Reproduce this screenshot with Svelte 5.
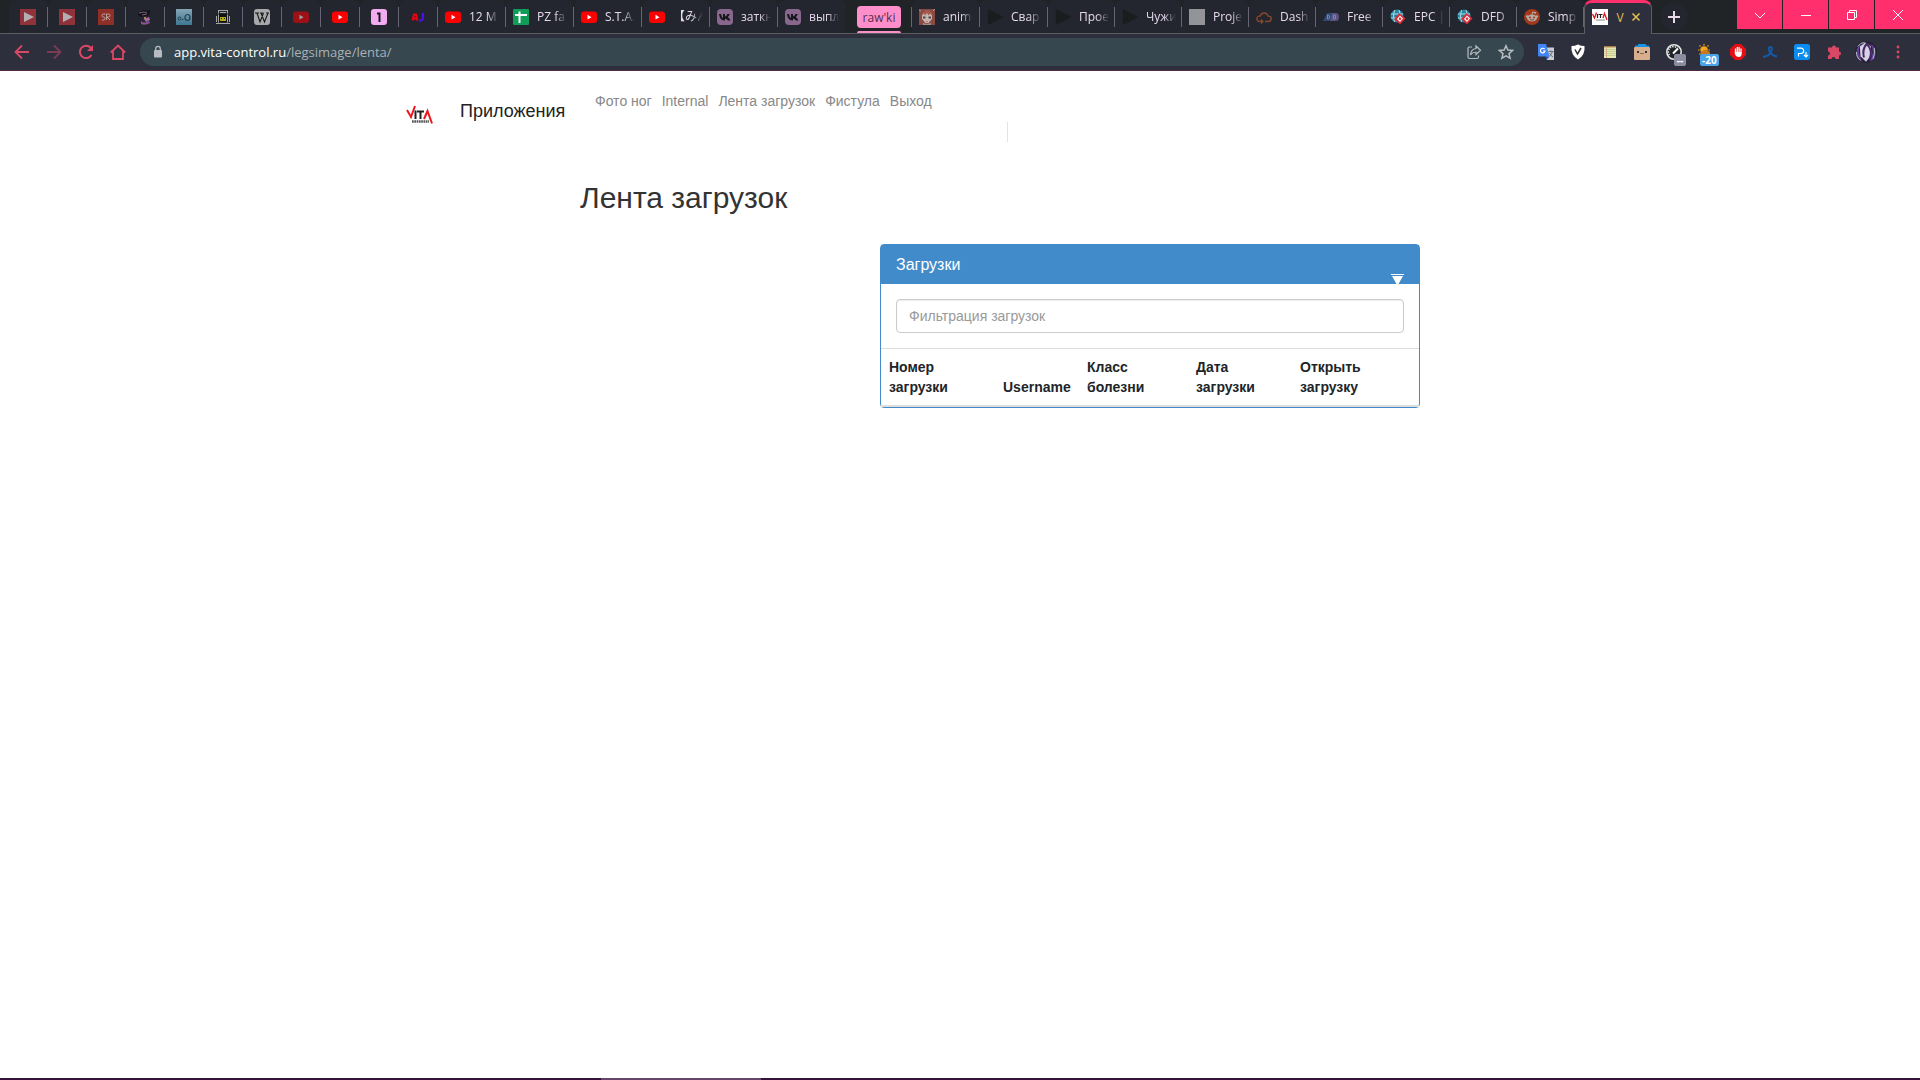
<script>
  const pinned = ['play', 'play', 'sr', 'robot', 'eyes', 'train', 'wiki', 'ytdim', 'yt', 'one', 'aj'];
  const tabs = [
    { icon: 'yt', title: '12 М' },
    { icon: 'sheet', title: 'PZ fa' },
    { icon: 'yt', title: 'S.T.A.' },
    { icon: 'yt', title: '【みん' },
    { icon: 'vk', title: 'заткн' },
    { icon: 'vk', title: 'выпл' }
  ];
  const grouped = [
    { icon: 'anime', title: 'anime' },
    { icon: 'dark', title: 'Свар' },
    { icon: 'dark', title: 'Прое' },
    { icon: 'dark', title: 'Чужи' },
    { icon: 'square', title: 'Proje' },
    { icon: 'cloud', title: 'Dash' },
    { icon: 'db', title: 'Free' },
    { icon: 'globe', title: 'EPC |' },
    { icon: 'globe', title: 'DFD |' },
    { icon: 'reddit', title: 'Simp' }
  ];
  const extensions = [
    ['translate', 'Переводчик'],
    ['shield', 'Щит'],
    ['notes', 'Заметки'],
    ['box', 'Коробка'],
    ['gauge', 'Скорость'],
    ['sun', 'Погода'],
    ['hand', 'Блокировщик'],
    ['ribbon', 'Лента'],
    ['pd', 'Загрузчик'],
    ['puzzle', 'Расширения'],
    ['avatar', 'Профиль'],
    ['dots', 'Меню']
  ];
  const badges = { gauge: '--', sun: '-20' };
  const links = ['Фото ног', 'Internal', 'Лента загрузок', 'Фистула', 'Выход'];
  const columns = ['Номер загрузки', 'Username', 'Класс болезни', 'Дата загрузки', 'Открыть загрузку'];
  let filter = $state('');
</script>

{#snippet icon(name)}
  <svg class="icon" viewBox="0 0 16 16" aria-hidden="true">
    {#if name === 'play'}
      <rect width="16" height="16" fill="#8f3239" /><path d="M4 3l10 5-10 5z" fill="#b5afb3" />
    {:else if name === 'sr'}
      <rect width="16" height="16" fill="#8e2f28" />
      <path d="M7.500 5H5.500a1.500 1.500 0 0 0 0 3a1.500 1.500 0 0 1 0 3H4M8.500 11V5h2a1.500 1.500 0 0 1 0 3H9l3 3" fill="none" stroke="#b9a39f" stroke-width="1" />
    {:else if name === 'robot'}
      <path d="M2 3l5-2 3 1 3-1v3l-2 3-7 1-3-2z" fill="#15131a" /><path d="M2 4l5-1 3 1M5 6l5-1" fill="none" stroke="#7d6685" stroke-width=".9" />
      <path d="M4 8l6-1 2 3-3 2-4-1z" fill="#33203a" /><path d="M4 12q3 3 8 0l1 2q-5 3-9 1z" fill="#8a5291" /><path d="M7 10l5-2 1 3-4 2z" fill="#a06ba6" /><path d="M7 8h2v2H7z" fill="#ad8640" />
    {:else if name === 'eyes'}
      <defs><linearGradient id="sky" x2="0" y2="1"><stop stop-color="#86a5b5" /><stop offset="1" stop-color="#3e7795" /></linearGradient></defs>
      <rect width="16" height="16" fill="url(#sky)" /><circle cx="3.500" cy="9.500" r="1.500" fill="none" stroke="#263c4b" /><path d="M6 10.500h1.500" stroke="#263c4b" /><ellipse cx="11.500" cy="8.500" rx="2.500" ry="3" fill="none" stroke="#263c4b" stroke-width="1.200" />
    {:else if name === 'train'}
      <path d="M3 5h10v8H3z" fill="#11120f" /><path d="M3 1.500h10M3.500 1.500v3M12.500 1.500v3M5 3.500h6M3.500 5.500v8M12.500 5.500v8M1.500 7v6M14.500 7v6M1 14.500h14" fill="none" stroke="#a5a6a6" stroke-width="1" /><path d="M5 8h6v4H5z" fill="#b2a91b" /><path d="M6 9h1v1H6zM9 9h1v1H9z" fill="#222" />
    {:else if name === 'wiki'}
      <rect width="16" height="16" rx="3" fill="#a7a9aa" /><path d="M1 4h4M6 4h3.500M12 4h3M3 4l3 9 3.500-9M7 4l3.500 9L14 4" fill="none" stroke="#17191b" stroke-width="1.100" />
    {:else if name === 'yt' || name === 'ytdim'}
      <g opacity={name === 'yt' ? 1 : 0.55}><rect y="2.500" width="16" height="11.500" rx="3" fill="#f00" /><path d="M6.500 5.800l4 2.400-4 2.400z" fill="#fff" /></g>
    {:else if name === 'one'}
      <rect width="16" height="16" rx="3" fill="#f2abf1" /><path d="M6 4.500h2.500V13" fill="none" stroke="#17191d" stroke-width="2" />
    {:else if name === 'aj'}
      <path d="M2.500 11.500l1.500-6h2l1.500 6M3 9.500h4" fill="none" stroke="#f00012" stroke-width="2" /><path d="M13 4v5q0 3-4 2.500" fill="none" stroke="#4a10f0" stroke-width="2.200" />
    {:else if name === 'sheet'}
      <rect width="16" height="16" rx="1" fill="#0f9d58" /><path d="M2 6h12M6.500 2.500v11.500" stroke="#fff" stroke-width="2" />
    {:else if name === 'vk'}
      <rect width="16" height="16" rx="4" fill="#89678f" /><path d="M2 5h2q.5 3 2 4V5h2v2.500Q9.500 7 10.500 5h2.300Q12 7 10.800 8 12.500 9 13.500 11.500H11Q10 9.800 8 9.500v2Q3 12 2 5z" fill="#15171b" />
    {:else if name === 'anime'}
      <rect width="16" height="16" fill="#8d4a42" /><path d="M3 5q5-3 10 0v5l-3.500 4h-3L3 10z" fill="#c7b5ae" /><path d="M4 7.500h2.500v2H4zM9.500 7.500H12v2H9.500z" fill="#49484b" /><path d="M7 12h2v.6H7z" fill="#8d4a42" /><path d="M2.500 7Q4 1 8 1t5.500 6L11 4.500 9.500 6.500 8 4 6 6.500 5 4.500z" fill="#a35a50" /><path d="M0 1l2 1M14 2l2-2" stroke="#999" /><path d="M4 14l4 1 4-1v2H4z" fill="#929292" />
    {:else if name === 'dark'}
      <path d="M2 .5Q.8 0 .8 1.500v13q0 1.500 1.200 1l13.500-7q1-.5 0-1z" fill="#1a1c1e" />
    {:else if name === 'square'}
      <rect width="16" height="16" fill="#929497" />
    {:else if name === 'cloud'}
      <path d="M6 12.500H3.500a2.700 2.700 0 0 1 0-5.400h.7a4 4 0 0 1 7.800 0h.5a2.700 2.700 0 0 1 0 5.400H9M5 10.500l2 2-2 2" fill="none" stroke="#85482b" stroke-width="1.400" />
    {:else if name === 'db'}
      <path d="M4 4h5v8H0z" fill="#314a75" /><path d="M9 4h4q3 0 3 4t-3 4H7z" fill="#5a5280" /><path d="M4.500 6v4h1q2.500-2 0-4zM10.500 6v4H12q2-1 0-2 1.500-1 0-2z" fill="none" stroke="#829cc2" stroke-width=".8" />
    {:else if name === 'globe'}
      <circle cx="7" cy="7" r="6.500" fill="#2787a5" /><path d="M1 5h12M1 9h10M4.500 1q-2 6 0 12M9 1q3 6 0 12" fill="none" stroke="#a8dce7" /><path d="M9.500 4l6 5.500-5.500 6-6-5.500z" fill="#d62e38" /><path d="M10 6.500l3 3-3 3.500-3-3z" fill="#fff" /><path d="M10 8l1.500 1.800L10 11.500 8.500 9.800z" fill="#d62e38" />
    {:else if name === 'reddit'}
      <circle cx="8" cy="8" r="8" fill="#a3391a" /><ellipse cx="8" cy="9" rx="5" ry="3.500" fill="#b5a9a5" /><circle cx="3.200" cy="7.500" r="1.300" fill="#b5a9a5" /><circle cx="12.800" cy="7.500" r="1.300" fill="#b5a9a5" /><circle cx="6" cy="8.500" r="1" fill="#a3391a" /><circle cx="10" cy="8.500" r="1" fill="#a3391a" /><path d="M6 10.500q2 1.200 4 0" fill="none" stroke="#6b2a18" stroke-width=".7" /><path d="M8 6l.7-3 2.500.7" fill="none" stroke="#b5a9a5" /><circle cx="11.200" cy="3.800" r="1" fill="#b5a9a5" />
    {:else if name === 'vita'}
      <rect width="16" height="16" fill="#fff" /><path d="M.5 5l2 4 2-5.500M11 9l1.500-4.500L15 11" fill="none" stroke="#e8131b" stroke-width="1.300" /><path d="M5.500 5v4M6.500 5.500h4M8.500 5v4" stroke="#222" stroke-width="1.200" /><path d="M4 11h9" stroke="#888" />
    {:else if name === 'translate'}
      <path d="M7 3.500h9V16H9z" fill="#c9ced3" /><path d="M0 0h8l3.500 12.500H1.200Q0 12.500 0 11.500z" fill="#4285f4" /><path d="M8.500 16l3-3.500H8z" fill="#2858b8" /><path d="M6.600 5.200A2.300 2.300 0 1 0 7 7H5" fill="none" stroke="#fff" stroke-width="1.200" /><path d="M10.500 7.500h5M13 6.500v1M14.500 7.500q-.8 3-3.200 4.500M11.500 9q1 2.500 3.500 4" fill="none" stroke="#5e6871" stroke-width=".9" />
    {:else if name === 'shield'}
      <path d="M8 .5q3 1.500 6.500 1.500Q15.500 11 8 15.500.5 11 1.500 2 5 2 8 .5z" fill="#fff" /><path d="M5 5.500l2.500 4.500L11 4" fill="none" stroke="#333" stroke-width="1.500" />
    {:else if name === 'notes'}
      <rect x="2" y="2" width="12" height="12" fill="#e8e7ad" /><path d="M2 2.700h12" stroke="#a77b49" stroke-width="1.400" /><path d="M2 5.500h12M2 7.500h12M2 9.500h12M2 11.500h12" stroke="#b9ca9b" stroke-width=".8" /><path d="M4.500 3.400V14" stroke="#d3a384" stroke-width=".8" />
    {:else if name === 'box'}
      <path d="M4 0h8v1.500h3V3H1V1.500h3z" fill="#1593e5" /><rect y="3" width="16" height="13" rx="1" fill="#d8ae8c" /><path d="M3 7h2v2H3zM11 7h2v2h-2zM6.500 9h1v1h-1zM8.500 9h1v1h-1z" fill="#333" />
    {:else if name === 'gauge'}
      <circle cx="8" cy="8" r="7.200" fill="#20242a" stroke="#e4e4e2" stroke-width="1.600" /><path d="M3.500 11a5 5 0 1 1 8-6.500" fill="none" stroke="#ddd" stroke-dasharray="1.500 1" stroke-width="1.500" /><path d="M7 9.500l5-5" stroke="#fff" stroke-width="2" />
    {:else if name === 'sun'}
      <circle cx="6" cy="6" r="3.700" fill="#f5a51b" /><path d="M6 0v1.500M1.500 1.500l1 1M0 6h1.500M1.500 10.500l1-1M10.500 1.500l-1 1M10.500 6H12" stroke="#f5a51b" stroke-width="1.200" /><path d="M3 10a2 2 0 0 1 2-3 3 3 0 0 1 5 0q2 0 2 3z" fill="#ca7a16" />
    {:else if name === 'hand'}
      <path d="M5 0h6l5 5v6l-5 5H5l-5-5V5z" fill="#e30f13" /><path d="M5.500 9V5M7.300 8V3.500M9.100 8V3.500M11 8V5" stroke="#fff" stroke-width="1.300" stroke-linecap="round" /><path d="M4.800 8h6.900v1.500q0 3.500-3 3.500Q6 13 4.800 10z" fill="#fff" />
    {:else if name === 'ribbon'}
      <path d="M1 13Q8 12 9.700 6.500 10.500 3 8.500 3T7 6q1.500 5 8 6.500" fill="none" stroke="#125bac" stroke-width="2" />
    {:else if name === 'pd'}
      <rect width="16" height="16" rx="2.500" fill="#0a8df0" /><path d="M4.500 12.500V9.500H7a2.700 2.700 0 0 0 0-5.400H3M12 8v5M10 11l2 2 2-2" fill="none" stroke="#fff" stroke-width="1.200" />
    {:else if name === 'puzzle'}
      <path d="M2 3.500h4a2 2 0 1 1 4 0h3v4a2 2 0 1 1 0 4V15H9.500a2 2 0 1 0-4 0H2v-3.500a2 2 0 1 0 0-4z" fill="#d94865" />
    {:else if name === 'avatar'}
      <circle cx="8" cy="8" r="8" fill="#282238" /><path d="M3.500 4l4-3 4 3 .5 6-4 5-4-4z" fill="#d5d3e4" /><path d="M8 .5Q2 2 3 9l2 6-3-2Q-.5 7 3 3zM8 1q5 1 5 7l-2 7 3-2q2.500-6-1-10z" fill="#5d3f92" /><path d="M8.500 2Q5 6 6.500 12M8 2q4 3 3.500 8l-1 4" fill="none" stroke="#482568" stroke-width="1.500" /><path d="M2 4q2-3 5-3M1 8q0 4 3 6M14 5q1 4-1 8" fill="none" stroke="#b4c3c7" stroke-width=".7" />
    {:else if name === 'dots'}
      <circle cx="8" cy="3" r="1.400" fill="#d94865" /><circle cx="8" cy="8" r="1.400" fill="#d94865" /><circle cx="8" cy="13" r="1.400" fill="#d94865" />
    {:else if name === 'back'}
      <path d="M15 8H2M8 1.500L1.500 8 8 14.500" fill="none" stroke="#d94865" stroke-width="1.800" />
    {:else if name === 'forward'}
      <path d="M1 8h13M8 1.500L14.500 8 8 14.500" fill="none" stroke="#7a3b55" stroke-width="1.800" />
    {:else if name === 'reload'}
      <path d="M13.500 11A6.200 6.200 0 1 1 12.500 3.500L14 5.500" fill="none" stroke="#d94865" stroke-width="2" /><path d="M15 1v6H9z" fill="#d94865" />
    {:else if name === 'home'}
      <path d="M.8 8.500L8 1.500l7.200 7M3 7v8h10V7" fill="none" stroke="#d94865" stroke-width="1.800" />
    {:else if name === 'lock'}
      <rect x="4" y="6" width="8" height="7.500" rx="1" fill="#b7bcc1" /><path d="M5.700 6.500V4.700a2.300 2.300 0 0 1 4.600 0v1.800" fill="none" stroke="#b7bcc1" stroke-width="1.300" />
    {:else if name === 'share'}
      <path d="M6 3H3.500Q2 3 2 4.500V13q0 1.500 1.500 1.500H11q1.500 0 1.500-1.500v-1.500" fill="none" stroke="#b7bcc1" stroke-width="1.200" /><path d="M10 2l4.500 4.300L10 10.500V8.300Q6.500 8 4.500 11 5 5 10 4.500z" fill="none" stroke="#b7bcc1" stroke-width="1.200" />
    {:else if name === 'star'}
      <path d="M8 1.800l1.900 4.300 4.700.4-3.600 3.100 1.100 4.600L8 11.800l-4.100 2.400L5 9.600 1.400 6.500l4.700-.4z" fill="none" stroke="#b7bcc1" stroke-width="1.500" />
    {:else if name === 'plus'}
      <path d="M8 2v12M2 8h12" stroke="#ead8e8" stroke-width="2" />
    {:else if name === 'cross'}
      <path d="M4.500 4.500l7 7M11.500 4.500l-7 7" stroke="#e0bd51" stroke-width="1.600" />
    {:else if name === 'down'}
      <path d="M3 6l5 5 5-5" fill="none" stroke="#fff" />
    {:else if name === 'min'}
      <path d="M3 8.500h10" stroke="#fff" />
    {:else if name === 'restore'}
      <path d="M3.500 5.500h7v7h-7zM5.500 5.500v-2h7v7h-2" fill="none" stroke="#fff" />
    {:else if name === 'close'}
      <path d="M3 3l10 10M13 3L3 13" stroke="#fff" />
    {/if}
  </svg>
{/snippet}

{#snippet tab(item)}
  <button class="tab">{@render icon(item.icon)}<span class="title">{item.title}</span></button>
{/snippet}

<div class="window">
  <header class="browser">
    <div class="strip">
      {#each pinned as name, i}
        <button class="tab pinned" aria-label={`Закреплённая вкладка ${i + 1}`}>{@render icon(name)}</button>
      {/each}
      {#each tabs as item}{@render tab(item)}{/each}
      <div class="group"><button class="chip">raw'ki</button></div>
      {#each grouped as item}{@render tab(item)}{/each}
      <div class="active">
        {@render icon('vita')}<span class="letter">V</span>
        <button class="shut" aria-label="Закрыть вкладку">{@render icon('cross')}</button>
      </div>
      <button class="new" aria-label="Новая вкладка">{@render icon('plus')}</button>
      <div class="controls">
        <button aria-label="Поиск вкладок">{@render icon('down')}</button>
        <button aria-label="Свернуть">{@render icon('min')}</button>
        <button aria-label="Восстановить">{@render icon('restore')}</button>
        <button aria-label="Закрыть">{@render icon('close')}</button>
      </div>
    </div>

    <div class="toolbar">
      <button class="tool" aria-label="Назад">{@render icon('back')}</button>
      <button class="tool" aria-label="Вперёд">{@render icon('forward')}</button>
      <button class="tool" aria-label="Обновить">{@render icon('reload')}</button>
      <button class="tool" aria-label="Домой">{@render icon('home')}</button>
      <div class="omnibox">
        {@render icon('lock')}
        <div class="address" role="textbox" tabindex="0" contenteditable="true" aria-label="Адрес"><span class="host">app.vita-control.ru</span>/legsimage/lenta/</div>
        <button class="tool" aria-label="Поделиться">{@render icon('share')}</button>
        <button class="tool" aria-label="В закладки">{@render icon('star')}</button>
      </div>
      {#each extensions as [name, label]}
        <button class="tool {name}" aria-label={label}>
          {@render icon(name)}
          {#if badges[name]}<span class="badge">{badges[name]}</span>{/if}
        </button>
      {/each}
    </div>
  </header>

  <div class="page">
    <nav class="navbar">
      <a class="logo" href="#home" aria-label="Vita Control">
        <svg viewBox="0 0 27 20" aria-hidden="true">
          <path d="M1 5l4 7L9 1" fill="none" stroke="#f0141b" stroke-width="2" />
          <path d="M9.500 5.500V14M11 6.500h7M14.500 6v8" stroke="#222" stroke-width="2" />
          <path d="M18 14l3.500-8L26 18.500" fill="none" stroke="#f0141b" stroke-width="2" />
          <path d="M6 16.500h17" stroke="#555" stroke-width="2.500" stroke-dasharray="1.700 .6" />
        </svg>
      </a>
      <a class="brand" href="#apps">Приложения</a>
      <div class="menu">
        <ul>
          {#each links as link}<li><a href="#{link}">{link}</a></li>{/each}
        </ul>
        <div class="rule"></div>
      </div>
    </nav>

    <main>
      <h1>Лента загрузок</h1>
      <section class="panel">
        <div class="heading">
          <h2>Загрузки</h2>
          <button class="toggle" aria-label="Фильтр">
            <svg viewBox="0 0 13 10" aria-hidden="true"><path d="M0 0h13v1H0zM1 2h11L7.500 10h-2z" fill="#fff" /></svg>
          </button>
        </div>
        <div class="body">
          <input type="text" aria-label="Фильтрация загрузок" placeholder="Фильтрация загрузок" bind:value={filter} />
        </div>
        <table>
          <thead>
            <tr>{#each columns as column}<th scope="col">{column}</th>{/each}</tr>
          </thead>
        </table>
      </section>
    </main>
  </div>

  <footer class="taskbar"><div></div></footer>
</div>

<style>
  :global(body) { margin: 0; background: #fff; }
  button { border: 0; padding: 0; background: none; font: inherit; color: inherit; display: flex; align-items: center; }
  .window { min-height: 100vh; display: flex; flex-direction: column; overflow-x: clip; }
  .icon { width: 16px; height: 16px; flex: none; display: block; }
  .browser { font-family: "Open Sans", "Noto Sans CJK JP", sans-serif; font-size: 12px; color: #e6d9ee; }

  .strip { display: flex; height: 33px; padding-left: 9px; background: #202426; border-bottom: 1px solid #5b5e61; }
  .tab { box-sizing: border-box; width: 68px; flex: none; gap: 8px; padding: 0 0 0 7px; background: linear-gradient(#676575, #676575) right 7px / 1px 20px no-repeat #23262f; border-radius: 7px 7px 0 0; }
  .group ~ .tab { width: 67px; }
  .group + .tab, .group + .tab + .tab { width: 68px; }
  .tab:has(+ .group) { background: #23262f; }
  .pinned { width: 39px; padding: 0 11px; }
  .title { flex: 1; min-width: 0; white-space: nowrap; text-align: left; line-height: 20px; mask-image: linear-gradient(90deg, #000 18px, transparent 30px); }
  .group { width: 66px; flex: none; display: flex; flex-direction: column; box-sizing: border-box; padding: 6px 11px 0 11px; background: linear-gradient(#676575, #676575) right 7px / 1px 20px no-repeat; }
  .chip { height: 22px; justify-content: center; border-radius: 4px; background: #ff8fcb; color: #55304d; margin-bottom: 3px; }
  .group::after { content: ""; height: 2px; background: #ff8fcb; border-radius: 2px 2px 0 0; }
  .active { box-sizing: border-box; width: 68px; height: 34px; flex: none; display: flex; align-items: center; padding: 0 7px; background: #2d303c; border: 1px solid #5b5e61; border-top: 3px solid #ff2e6c; border-bottom: 0; border-radius: 8px 8px 0 0; color: #e0bd51; }
  .active .icon { margin-bottom: 3px; }
  .letter { flex: 1; text-align: center; margin-bottom: 3px; padding-left: 4px; }
  .new { width: 28px; height: 28px; margin: 3px 0 0 8px; border-radius: 50%; justify-content: center; background: #23262f; }
  .controls { margin-left: auto; display: flex; gap: 1px; height: 29px; }
  .controls button { width: 45px; justify-content: center; background: #ff2e6c; }

  .toolbar { display: flex; align-items: center; height: 36px; padding: 0 6px; background: #2d303c; border-bottom: 1px solid #532b4a; }
  .tool { position: relative; width: 32px; height: 28px; flex: none; justify-content: center; }
  .omnibox { flex: 1; height: 28px; display: flex; align-items: center; gap: 8px; margin: 0 6px; padding: 0 2px 0 10px; border-radius: 14px; background: #36474f; }
  .omnibox .tool + .tool { margin-left: -8px; }
  .address { flex: 1; font-size: 13px; line-height: 20px; color: #a9b0b6; white-space: nowrap; outline: 0; }
  .host { color: #fff; }
  .badge { position: absolute; left: 16px; top: 16px; box-sizing: border-box; min-width: 12px; padding: 0 2px; border-radius: 2px; background: #8c8ba0; color: #fff; font-size: 10px; font-weight: 700; line-height: 12px; }
  .sun .badge { left: 10px; background: #4aa3e8; }
  .avatar .icon { width: 22px; height: 22px; }

  .page { flex: 1; font-family: "Liberation Sans", Arial, sans-serif; font-size: 14px; line-height: 20px; color: #212529; }
  .navbar { display: flex; max-width: 1108px; margin: 0 auto; }
  .logo { padding-top: 34px; width: 54px; }
  .logo svg { width: 27px; height: 20px; display: block; }
  .brand { padding-top: 30px; width: 135px; font-size: 18px; color: #222; text-decoration: none; }
  .menu { padding-top: 20px; flex: 1; }
  ul { list-style: none; display: flex; gap: 10px; margin: 0; padding: 0; }
  li a { color: #888; text-decoration: none; }
  .rule { width: 413px; max-width: 100%; box-sizing: border-box; height: 20px; margin-top: 11px; border-right: 1px solid #e4e4e4; }
  main { box-sizing: border-box; width: 100%; max-width: 920px; margin: 0 auto; padding: 38px 0 0 80px; }
  h1 { margin: 0; font-size: 30px; font-weight: 400; line-height: 36px; color: #333; }
  .panel { box-sizing: border-box; max-width: 540px; margin: 28px 0 0 auto; border: 1px solid #428bca; border-radius: 4px; }
  .heading { display: flex; justify-content: space-between; align-items: flex-end; height: 39px; padding: 0 15px; background: #428bca; color: #fff; }
  h2 { margin: 0; align-self: center; font-size: 16px; font-weight: 400; line-height: 20px; }
  .toggle svg { width: 13px; height: 10px; display: block; }
  .body { padding: 15px; }
  input { box-sizing: border-box; width: 100%; height: 34px; padding: 6px 12px; border: 1px solid #ccc; border-radius: 4px; font: inherit; color: #555; box-shadow: inset 0 1px 1px rgb(0 0 0 / 8%); display: block; }
  input::placeholder { color: #999; opacity: 1; }
  table { width: 100%; table-layout: fixed; border-collapse: collapse; border-top: 1px solid #ddd; border-bottom: 2px solid #ddd; }
  th { padding: 8px; text-align: left; vertical-align: bottom; }
  th:nth-child(1) { width: 98px; }
  th:nth-child(2) { width: 68px; }
  th:nth-child(3) { width: 93px; }
  th:nth-child(4) { width: 88px; }

  .taskbar { height: 2px; background: #34123a; display: flex; }
  .taskbar div { width: 160px; margin-left: 601px; background: #66466a; }
</style>
